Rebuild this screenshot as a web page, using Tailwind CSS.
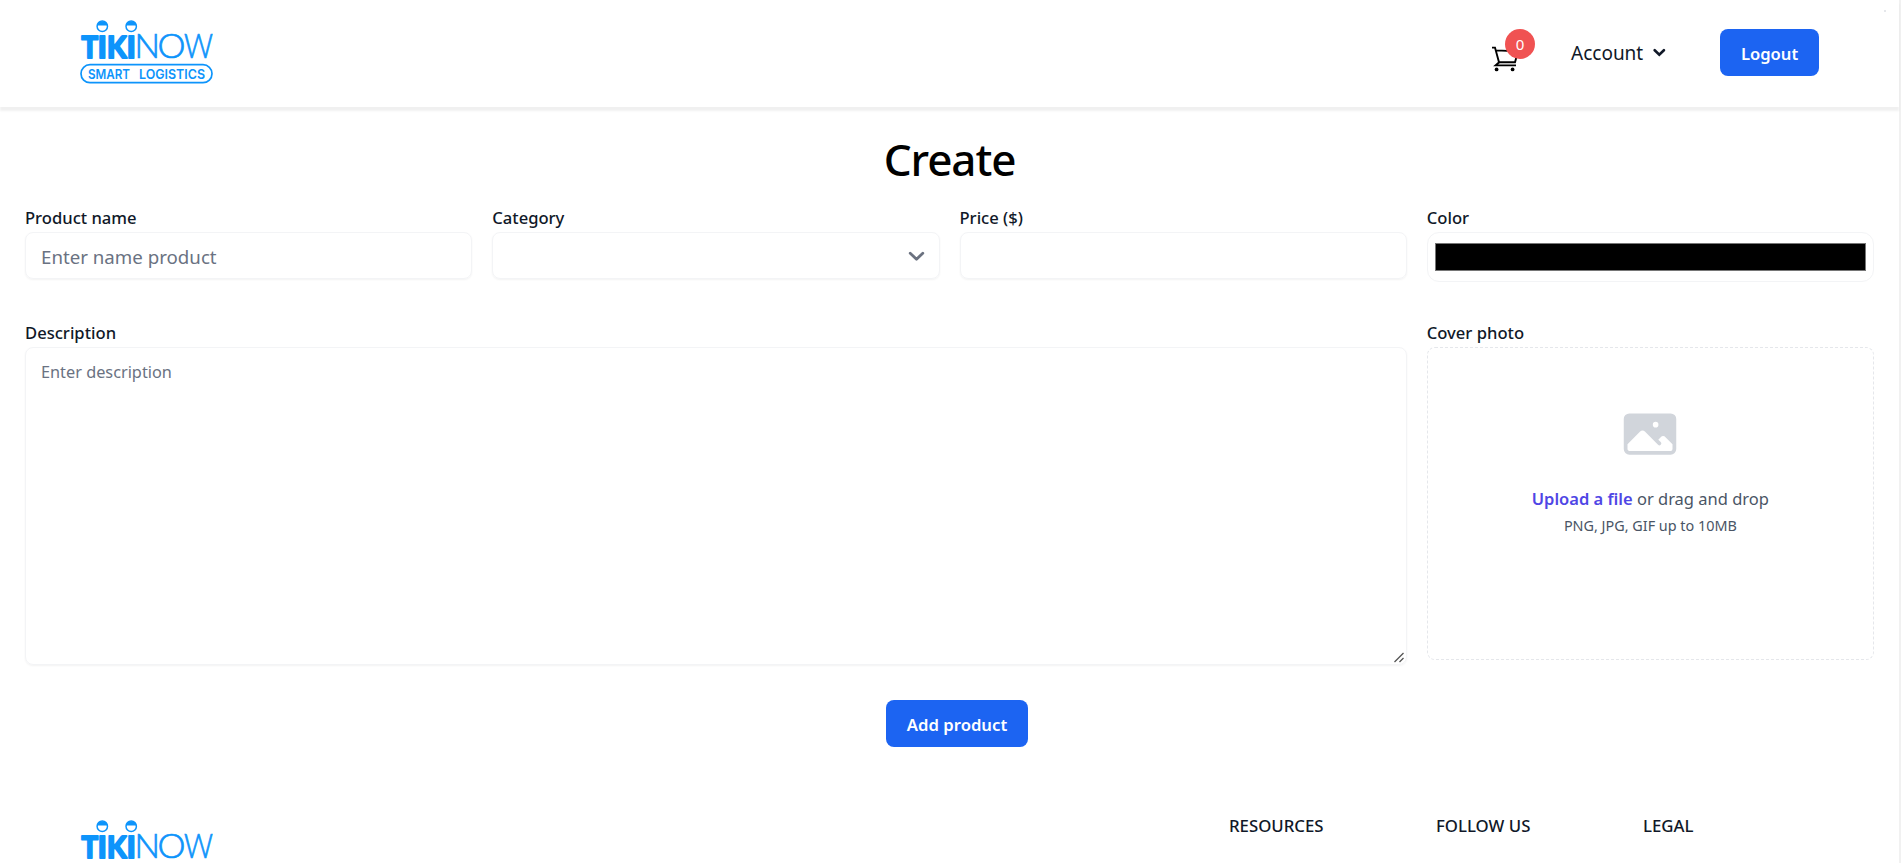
<!DOCTYPE html>
<html lang="en">
<head>
<meta charset="utf-8">
<title>Create product</title>
<script src="https://cdn.jsdelivr.net/npm/@tailwindcss/browser@4"></script>
</head>
<body class="h-[863px] overflow-hidden bg-white font-['Noto_Sans','Open_Sans',sans-serif] text-base leading-6 text-gray-900">
<svg class="hidden">
  <symbol id="logo" viewBox="0 0 133 66">
    <g fill="#0d94fb">
      <g font-family="Lato, sans-serif" font-weight="700" font-size="31" stroke="#0d94fb" stroke-width="2.2" stroke-linejoin="round">
        <text x="1.5" y="37.8" textLength="16.5" lengthAdjust="spacingAndGlyphs">T</text>
        <text x="17.8" y="37.8" textLength="9" lengthAdjust="spacingAndGlyphs">I</text>
        <text x="27" y="37.8" textLength="19.5" lengthAdjust="spacingAndGlyphs">K</text>
        <text x="46.7" y="37.8" textLength="9" lengthAdjust="spacingAndGlyphs">I</text>
      </g>
      <g font-family="Lato, sans-serif" font-weight="300" font-size="33.5" stroke="#0d94fb" stroke-width=".7">
        <text x="54.5" y="38.3" textLength="25.5" lengthAdjust="spacingAndGlyphs">N</text>
        <text x="77.5" y="38.3" textLength="28" lengthAdjust="spacingAndGlyphs">O</text>
        <text x="104" y="38.3" textLength="29" lengthAdjust="spacingAndGlyphs">W</text>
      </g>
      <circle cx="22.3" cy="6.3" r="5.2" fill="#fff" stroke="#0d94fb" stroke-width="1.5"/>
      <path d="M17 5.6a5.4 5.4 0 0 1 10.6 0z"/>
      <circle cx="51.2" cy="6.3" r="5.2" fill="#fff" stroke="#0d94fb" stroke-width="1.5"/>
      <path d="M45.9 5.6a5.4 5.4 0 0 1 10.6 0z"/>
      <rect x="1" y="44.7" width="131" height="18" rx="9" fill="none" stroke="#0d94fb" stroke-width="1.7"/>
      <g font-family="Inter, sans-serif" font-weight="600" font-size="13.4">
        <text x="8" y="58.6" textLength="42" lengthAdjust="spacingAndGlyphs">SMART</text>
        <text x="59" y="58.6" textLength="66" lengthAdjust="spacingAndGlyphs">LOGISTICS</text>
      </g>
    </g>
  </symbol>
</svg>
<div class="flex h-full">
  <div class="flex w-[1899px] shrink-0 flex-col">
    <header class="relative flex h-[107px] shrink-0 items-start justify-between px-20 shadow-[0_4px_2px_rgba(0,0,0,0.06)]">
      <span class="absolute top-[10px] right-[13px] size-[2px] bg-gray-200"></span>
      <svg class="mt-5 h-[66px] w-[133px]"><use href="#logo"/></svg>
      <div class="flex items-start pt-[29px]">
        <div class="relative mt-4 mr-[54px] h-7 w-[25px]">
          <svg class="h-7 w-7" viewBox="0 0 28 28" fill="none" stroke="#000" stroke-width="1.9">
            <path d="M0 2.6h3l4 14.6h16l3-10.8L4.2 5.4"/><path d="M7.2 17.2L3.6 20.4h20.4"/>
            <circle cx="4.6" cy="24.4" r="1.9" fill="#000" stroke="none"/><circle cx="20.6" cy="24.4" r="1.9" fill="#000" stroke="none"/>
          </svg>
          <span class="absolute -top-4 left-[13px] flex size-[30px] items-center justify-center rounded-full bg-[#f05252] text-[15px] text-white">0</span>
        </div>
        <div class="flex h-[47px] items-center text-[19px]"><span class="w-[72px] whitespace-nowrap">Account</span>
          <svg class="ml-[10px] h-3 w-[13px]" viewBox="0 0 13 12" fill="none" stroke="#111928" stroke-width="2.6" stroke-linecap="round"><path d="M1.7 3.2l4.6 4.4 4.6-4.4"/></svg>
        </div>
        <button class="ml-[54px] h-[47px] w-[99px] rounded-lg bg-[#1c64f2] pt-[2px] text-[16.6px] font-semibold text-white">Logout</button>
      </div>
    </header>
    <main class="px-[25px]">
      <h1 class="mt-[22px] h-[62px] text-center text-[44px] leading-[60px] font-medium tracking-[-1.1px] text-black">Create</h1>
      <div class="mt-[15px] grid grid-cols-4 gap-x-5 text-[16.6px] font-medium">
        <div><div class="h-[26px]">Product name</div>
          <div class="flex h-[47px] items-center rounded-lg border border-gray-100 px-[15px] pt-[2px] text-[18.7px] font-normal text-gray-500 shadow-xs">Enter name product</div></div>
        <div><div class="h-[26px]">Category</div>
          <div class="flex h-[47px] items-center justify-end rounded-lg border border-gray-100 px-[14px] shadow-xs">
            <svg class="h-4 w-[18px]" viewBox="0 0 18 16" fill="none" stroke="#6b7280" stroke-width="2.8" stroke-linecap="round" stroke-linejoin="round"><path d="M3.2 5.2L9.5 11.2l6.3-6"/></svg></div></div>
        <div><div class="h-[26px]">Price ($)</div>
          <div class="h-[47px] rounded-lg border border-gray-100 shadow-xs"></div></div>
        <div><div class="h-[26px]">Color</div>
          <div class="h-[50px] rounded-xl border border-gray-100 px-[7px] py-[10px]"><div class="h-full border border-[#767676] bg-black"></div></div></div>
      </div>
      <div class="mt-[39px] grid grid-cols-4 gap-x-5 text-[16.6px] font-medium">
        <div class="col-span-3"><div class="h-[26px]">Description</div>
          <div class="flex h-[318px] justify-between rounded-lg border border-gray-100 pt-[12px] pl-[15px] text-[16.3px] font-normal text-gray-500 shadow-xs"><span>Enter description</span>
            <svg class="mr-[1px] mb-[1px] size-3 self-end" viewBox="0 0 12 12" fill="none" stroke="#555" stroke-width="1.3"><path d="M1.5 11L10.5 2M6.5 11L10.5 7"/></svg></div></div>
        <div><div class="h-[26px]">Cover photo</div>
          <div class="flex h-[313px] flex-col items-center rounded-lg border border-dashed border-gray-200 pt-[56px] font-normal text-gray-600">
            <svg class="size-[60px]" viewBox="0 0 24 24" fill="#d1d5db"><path fill-rule="evenodd" clip-rule="evenodd" d="M1.5 6a2.25 2.25 0 012.25-2.25h16.5A2.25 2.25 0 0122.5 6v12a2.25 2.25 0 01-2.25 2.25H3.75A2.25 2.25 0 011.5 18V6zM3 16.06V18c0 .414.336.75.75.75h16.5A.75.75 0 0021 18v-1.94l-2.69-2.689a1.5 1.5 0 00-2.12 0l-.88.879.97.97a.75.75 0 11-1.06 1.06l-5.16-5.159a1.5 1.5 0 00-2.12 0L3 16.061zm10.125-7.81a1.125 1.125 0 112.25 0 1.125 1.125 0 01-2.25 0z"/></svg>
            <p class="mt-[23px] text-[16.5px]"><span class="font-semibold text-[#4f46e5]">Upload a file</span> or drag and drop</p>
            <p class="mt-[3px] text-[14.4px] leading-6">PNG, JPG, GIF up to 10MB</p>
          </div></div>
      </div>
      <div class="mt-[35px] flex justify-center pl-[15px]"><button class="h-[47px] w-[142px] rounded-lg bg-[#1c64f2] pt-[2px] text-[16.7px] font-semibold text-white">Add product</button></div>
    </main>
    <footer class="mt-[67px] flex justify-between pl-20">
      <svg class="mt-[6px] h-[66px] w-[133px]"><use href="#logo"/></svg>
      <div class="grid grid-cols-[207px_207px_256px] text-[16.8px] font-medium"><span>RESOURCES</span><span>FOLLOW US</span><span>LEGAL</span></div>
    </footer>
  </div>
  <div class="w-[2px] bg-[#f1f1f1]"></div>
</div>
</body>
</html>
